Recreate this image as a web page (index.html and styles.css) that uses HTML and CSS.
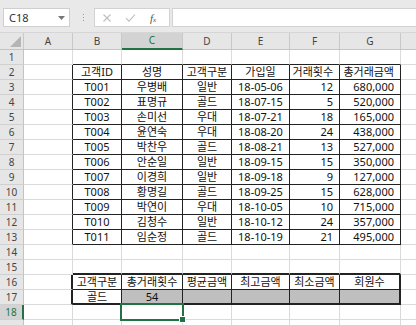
FILE: index.html
```html
<!DOCTYPE html>
<html lang="ko">
<head>
<meta charset="utf-8">
<link rel="stylesheet" href="styles.css">
</head>
<body>
<div class="app">
  <div class="toolbar">
    <div class="namebox"><span>C18</span><svg class="dd" width="7" height="4" viewBox="0 0 7 4"><path d="M0 0H7L3.5 4Z" fill="#777"/></svg></div>
    <div class="dots"><i></i><i></i><i></i></div>
    <div class="fxbox">
      <svg class="ic" width="10" height="10" viewBox="0 0 10 10"><path d="M1.5 1.5L8.5 8.5M8.5 1.5L1.5 8.5" stroke="#bdbdbd" stroke-width="1.1"/></svg>
      <svg class="ic" width="11" height="10" viewBox="0 0 11 10"><path d="M1 5.2L4 8.2L10 1.5" stroke="#bdbdbd" stroke-width="1.1" fill="none"/></svg>
      <span class="fx">f<small>x</small></span>
    </div>
    <div class="finput"></div>
  </div>
  <div class="sheet">
    <div class="row hdr"><div class="corner"><svg width="11" height="11" viewBox="0 0 11 11"><path d="M11 0V11H0Z" fill="#b5b5b5"/></svg></div><div>A</div><div>B</div><div class="csel">C</div><div>D</div><div>E</div><div>F</div><div>G</div><div></div></div>
    <div class="row above"><div>1</div><div></div><div></div><div></div><div></div><div></div><div></div><div></div><div></div></div>
    <div class="row t"><div>2</div><div></div><div>고객ID</div><div>성명</div><div>고객구분</div><div>가입일</div><div class="ctr">거래횟수</div><div class="ctr">총거래금액</div><div></div></div>
    <div class="row t"><div>3</div><div></div><div>T001</div><div>우병배</div><div>일반</div><div>18-05-06</div><div>12</div><div>680,000</div><div></div></div>
    <div class="row t"><div>4</div><div></div><div>T002</div><div>표명규</div><div>골드</div><div>18-07-15</div><div>5</div><div>520,000</div><div></div></div>
    <div class="row t"><div>5</div><div></div><div>T003</div><div>손미선</div><div>우대</div><div>18-07-21</div><div>18</div><div>165,000</div><div></div></div>
    <div class="row t"><div>6</div><div></div><div>T004</div><div>윤연숙</div><div>우대</div><div>18-08-20</div><div>24</div><div>438,000</div><div></div></div>
    <div class="row t"><div>7</div><div></div><div>T005</div><div>박찬우</div><div>골드</div><div>18-08-21</div><div>13</div><div>527,000</div><div></div></div>
    <div class="row t"><div>8</div><div></div><div>T006</div><div>안순일</div><div>일반</div><div>18-09-15</div><div>15</div><div>350,000</div><div></div></div>
    <div class="row t"><div>9</div><div></div><div>T007</div><div>이경희</div><div>일반</div><div>18-09-18</div><div>9</div><div>127,000</div><div></div></div>
    <div class="row t"><div>10</div><div></div><div>T008</div><div>황명길</div><div>골드</div><div>18-09-25</div><div>15</div><div>628,000</div><div></div></div>
    <div class="row t"><div>11</div><div></div><div>T009</div><div>박연이</div><div>우대</div><div>18-10-05</div><div>10</div><div>715,000</div><div></div></div>
    <div class="row t"><div>12</div><div></div><div>T010</div><div>김청수</div><div>일반</div><div>18-10-12</div><div>24</div><div>357,000</div><div></div></div>
    <div class="row t"><div>13</div><div></div><div>T011</div><div>임순정</div><div>골드</div><div>18-10-19</div><div>21</div><div>495,000</div><div></div></div>
    <div class="row"><div>14</div><div></div><div></div><div></div><div></div><div></div><div></div><div></div><div></div></div>
    <div class="row above2"><div>15</div><div></div><div></div><div></div><div></div><div></div><div></div><div></div><div></div></div>
    <div class="row s"><div>16</div><div></div><div>고객구분</div><div>총거래횟수</div><div>평균금액</div><div>최고금액</div><div>최소금액</div><div>회원수</div><div></div></div>
    <div class="row s s2"><div>17</div><div></div><div>골드</div><div class="fill">54</div><div class="fill"></div><div class="fill"></div><div class="fill"></div><div class="fill"></div><div></div></div>
    <div class="row r18"><div>18</div><div></div><div></div><div class="active"><span class="selbox"></span><span class="handle"></span></div><div></div><div></div><div></div><div></div><div></div></div>
    <div class="row"><div></div><div></div><div></div><div></div><div></div><div></div><div></div><div></div><div></div></div>
  </div>
</div>
</body>
</html>
```

FILE: styles.css
```css
html, body {
  margin: 0;
  padding: 0;
  background: #fff;
}
body {
  font-family: "Noto Sans", "Noto Sans CJK KR", sans-serif;
  color: #111;
}
.app {
  width: 416px;
  height: 325px;
  overflow: hidden;
}
.toolbar {
  height: 33px;
  box-sizing: border-box;
  background: #e9e9e9;
  border-bottom: 1px solid #d6d6d6;
  display: flex;
  align-items: flex-start;
  padding-top: 8px;
}
.namebox {
  margin-left: 3px;
  width: 67px;
  height: 19px;
  box-sizing: border-box;
  background: #fff;
  border: 1px solid #cfcfcf;
  display: flex;
  align-items: center;
  justify-content: space-between;
  padding: 0 4px 0 5px;
  font-size: 11px;
  color: #333;
}
.namebox .dd {
  display: block;
}
.dots {
  margin-left: 13px;
  height: 19px;
  display: flex;
  flex-direction: column;
  justify-content: center;
  gap: 2px;
}
.dots i {
  display: block;
  width: 1px;
  height: 1px;
  background: #9a9a9a;
}
.fxbox {
  margin-left: 10px;
  width: 76px;
  height: 19px;
  box-sizing: border-box;
  background: #fff;
  border: 1px solid #d2d2d2;
  display: flex;
  align-items: center;
  padding-left: 7px;
  gap: 13px;
}
.fxbox .ic {
  display: block;
}
.fx {
  font-family: "Liberation Serif", serif;
  font-style: italic;
  font-size: 11px;
  color: #555;
  margin-left: 1px;
}
.fx small {
  font-size: 7px;
}
.finput {
  margin-left: 2px;
  flex: 1;
  height: 19px;
  box-sizing: border-box;
  background: #fff;
  border: 1px solid #d2d2d2;
  border-right: none;
}
.row {
  display: grid;
  grid-template-columns: 24px 49px 49px 61px 49px 58px 50px 61px 1fr;
  height: 15px;
}
.row > div {
  box-sizing: border-box;
  border-right: 1px solid #dadada;
  border-bottom: 1px solid #dadada;
  font-size: 11px;
  line-height: 14px;
  white-space: nowrap;
  overflow: hidden;
  text-align: center;
  color: #111;
}
.row > div:first-child {
  background: #e6e6e6;
  color: #444;
  border-right-color: #c3c3c3;
  border-bottom-color: #d0d0d0;
  font-size: 10px;
}
.row > div:last-child {
  border-right: none;
}
.hdr {
  height: 17px;
}
.hdr > div {
  background: #e6e6e6;
  color: #444 !important;
  border-right-color: #c8c8c8 !important;
  border-bottom-color: #c3c3c3 !important;
  line-height: 16px !important;
  font-size: 10px !important;
}
.hdr .corner {
  display: flex;
  align-items: flex-end;
  justify-content: flex-end;
  padding: 0 2px 2px 0;
}
.hdr .corner svg {
  display: block;
}
.hdr .csel {
  background: #d3d3d3;
  color: #217346 !important;
  border-bottom: 2px solid #217346 !important;
  line-height: 15px !important;
}
.above > div:nth-child(n+3):nth-child(-n+8) {
  border-bottom-color: #222;
}
.t > div:nth-child(2) {
  border-right-color: #222;
}
.t > div:nth-child(n+3):nth-child(-n+8) {
  border-right-color: #222;
  border-bottom-color: #222;
}
.t > div:nth-child(n+7):nth-child(-n+8) {
  text-align: right;
  padding-right: 6px;
}
.t > div.ctr {
  text-align: center;
  padding-right: 0;
}
.above2 > div:nth-child(n+3):nth-child(-n+8) {
  border-bottom: 2px solid #222;
}
.s > div:nth-child(2) {
  border-right: 2px solid #222;
}
.s > div:nth-child(n+3):nth-child(-n+8) {
  border-right-color: #222;
  border-bottom-color: #222;
}
.s > div:nth-child(8) {
  border-right: 2px solid #222;
}
.s2 > div:nth-child(n+3):nth-child(-n+8) {
  border-bottom: 2px solid #222;
  line-height: 13px;
}
.fill {
  background: #bfbfbf;
}
.r18 > div:first-child {
  background: #d3d3d3;
  color: #217346;
  border-right: 2px solid #217346;
}
.row > div.active {
  position: relative;
  overflow: visible;
}
.selbox {
  position: absolute;
  left: -2px;
  top: -2px;
  right: -2px;
  bottom: -2px;
  border: 2px solid #217346;
}
.handle {
  position: absolute;
  right: -4px;
  bottom: -4px;
  width: 5px;
  height: 5px;
  background: #217346;
  border: 1px solid #fff;
}
```
